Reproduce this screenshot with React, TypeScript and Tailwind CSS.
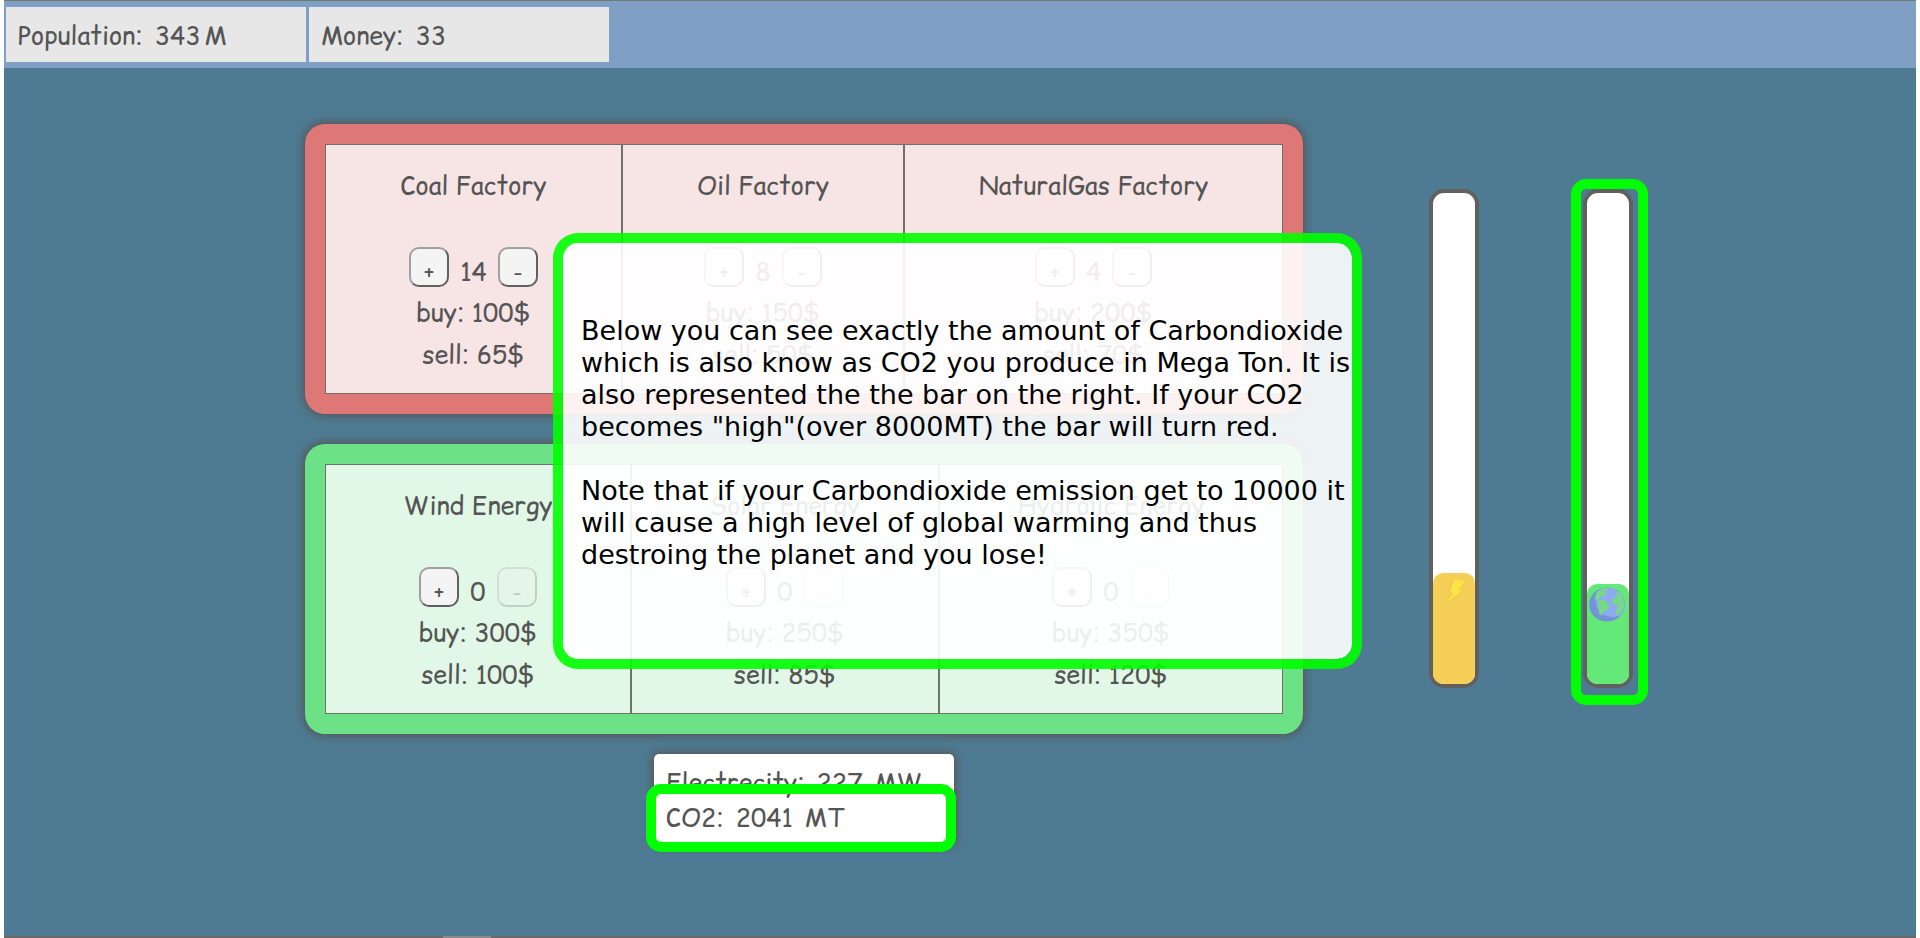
type Plant = { name: string; count: number; buy: number; sell: number };

const fossil: Plant[] = [
  { name: "Coal Factory", count: 14, buy: 100, sell: 65 },
  { name: "Oil Factory", count: 8, buy: 150, sell: 50 },
  { name: "NaturalGas Factory", count: 4, buy: 200, sell: 70 },
];

const renewable: Plant[] = [
  { name: "Wind Energy", count: 0, buy: 300, sell: 100 },
  { name: "Solar Energy", count: 0, buy: 250, sell: 85 },
  { name: "Hydrolic Energy", count: 0, buy: 350, sell: 120 },
];

const stepButton =
  "h-10 w-10 rounded-[10px] border-2 border-t-[#a0a0a0] border-l-[#a0a0a0] border-r-[#606060] border-b-[#606060] bg-[#f4f4f4] pt-[10px] text-[22px] leading-6 disabled:opacity-25";

function PlantCell({ plant }: { plant: Plant }) {
  return (
    <article className="flex flex-col items-center border border-[#707070] pt-5 pb-4">
      <h2 className="leading-[42px]">{plant.name}</h2>
      <div className="mt-10 flex h-10 items-center gap-[11px]">
        <button className={stepButton} aria-label={`Buy ${plant.name}`}>+</button>
        <span className="pt-2">{plant.count}</span>
        <button className={stepButton} aria-label={`Sell ${plant.name}`} disabled={plant.count === 0}>-</button>
      </div>
      <p className="mt-[5px] leading-[42px]">buy: {plant.buy}$</p>
      <p className="leading-[42px]">sell: {plant.sell}$</p>
    </article>
  );
}

function Bolt() {
  return (
    <svg viewBox="0 0 28 31" className="mx-auto mt-1 h-[31px] w-7" aria-hidden="true">
      <path d="M13 1 26 4 20 13 23 15 2 31 11 17 8 15Z" fill="#f3c44f" />
      <path d="M14 2 25 4 19 13 22 14 4 28 13 17 10 14Z" fill="#fae545" />
    </svg>
  );
}

function Globe() {
  return (
    <svg viewBox="0 0 41 35" className="-ml-px mt-[3px] h-[35px] w-[41px]" aria-hidden="true">
      <ellipse cx="21" cy="17.5" rx="18" ry="17" fill="#7494d9" />
      <path d="M11 4C16 0 26-1 33 5c7 6 8 16 2 23-6 3-12 2-17 0C10 24 8 12 11 4Z" fill="#8eaaf0" />
      <path d="M10 7c3-5 8-6 12-6l-2 3-3 1 4 1-3 3-4 1-2 4-3-2ZM13 13l5 0 6 5-3 5-4 2-2 4-2-3-1-7ZM31 4c5 4 8 9 7 15-1 4-3 7-6 9h-2v-4l2-3-1-3-4-1-1-4 5-4Z" fill="#76d988" />
    </svg>
  );
}

export default function App() {
  return (
    <div className="flex min-h-screen flex-col bg-white px-1 font-['Comic_Relief','Comic_Neue',cursive] text-[25px] leading-[35px] text-[#555555]">
      <div className="flex flex-1 flex-col bg-[#4e7b93]">
        <header className="flex gap-[3px] border-t border-[#6d7d6a] bg-[#7fa0c4] px-[2px] pt-[6px] pb-[6px]">
          <div className="flex h-[55px] w-[300px] items-center gap-3 bg-[#e7e7e7] px-3 pt-[2px]">
            <span>Population:</span>
            <span className="flex gap-1"><span>343</span><span>M</span></span>
          </div>
          <div className="flex h-[55px] w-[300px] items-center gap-3 bg-[#e7e7e7] px-3 pt-[2px]">
            <span>Money:</span>
            <span>33</span>
          </div>
        </header>

        <main className="grid grid-cols-[301fr_998fr_126fr_50fr_104fr_50fr_283fr] items-start pt-14">
          <div className="relative col-start-2 flex flex-col">
            <section className="grid h-[290px] grid-cols-[297fr_282fr_379fr] rounded-[20px] bg-[#dd7876] p-5 shadow-[0_0_10px_2px_#555555]">
              {fossil.map((p) => (
                <div key={p.name} className="grid bg-[#f7e4e4]"><PlantCell plant={p} /></div>
              ))}
            </section>
            <section className="mt-[30px] grid h-[290px] grid-cols-[306fr_308fr_344fr] rounded-[20px] bg-[#6ce186] p-5 shadow-[0_0_10px_2px_#555555]">
              {renewable.map((p) => (
                <div key={p.name} className="grid bg-[#e1f8e6]"><PlantCell plant={p} /></div>
              ))}
            </section>
            <section className="mt-5 w-[300px] self-center rounded-[5px] bg-white px-3 pt-[11px] pb-[9px] shadow-[0_0_10px_2px_#555555]">
              <p className="flex gap-3"><span>Electrecity:</span><span>227</span><span>MW</span></p>
              <p className="relative flex gap-3">
                <span>CO2:</span><span>2041</span><span>MT</span>
                <span className="absolute -top-4 -right-[14px] -bottom-[17px] -left-5 rounded-[15px] border-10 border-[#00ff00]" />
              </p>
            </section>

            <div
              role="dialog"
              aria-label="Carbondioxide"
              className="absolute top-[109px] left-[248px] h-[436px] w-[809px] rounded-[25px] border-10 border-[#00ff00]/90 bg-white/90 bg-clip-padding pt-[72px] pl-[18px] font-['DejaVu_Sans',sans-serif] text-[27px] leading-8 text-black"
            >
              <p>
                Below you can see exactly the amount of Carbondioxide which is also know as CO2 you produce in
                Mega Ton. It is also represented the the bar on the right. If your CO2 becomes "high"(over
                8000MT) the bar will turn red.
              </p>
              <p className="mt-8">
                Note that if your Carbondioxide emission get to 10000 it will cause a high level of global
                warming and thus destroing the planet and you lose!
              </p>
            </div>
          </div>

          <div className="col-start-4 mt-[65px] flex h-[499px] w-[50px] flex-col justify-end rounded-[15px] border-4 border-[#60605f] bg-white">
            <div className="h-[111px] rounded-[10px] bg-[#f6cf58]"><Bolt /></div>
          </div>

          <div className="relative col-start-6 mt-[65px] flex h-[499px] w-[50px] flex-col justify-end rounded-[15px] border-4 border-[#60605f] bg-white">
            <div className="h-[100px] rounded-[10px] bg-[#64e978]"><Globe /></div>
            <div className="absolute -top-[14px] -right-[19px] -bottom-[21px] -left-4 rounded-[15px] border-10 border-[#00ff00]" />
          </div>
        </main>

        <footer className="mt-auto flex h-[2px] bg-[#6a6a68] pl-[439px]">
          <div className="w-12 bg-[#8a8a88]" />
        </footer>
      </div>
    </div>
  );
}
